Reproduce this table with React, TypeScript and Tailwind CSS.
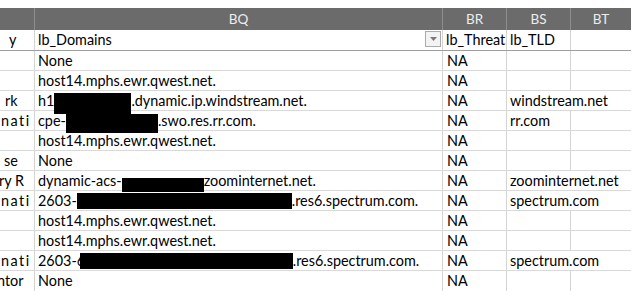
type Seg = string | { box: number; top: number; h: number } | { clip: string; w: number }

type Row = {
  a?: string
  aPad?: string
  bq: Seg[]
  bs?: string
  span?: boolean
}

const rows: Row[] = [
  { bq: ['None'] },
  { bq: ['host14.mphs.ewr.qwest.net.'] },
  {
    a: 'rk',
    aPad: 'pl-[5px]',
    bq: ['h1', { box: 77, top: 2, h: 21 }, '.dynamic.ip.windstream.net.'],
    bs: 'windstream.net',
    span: true,
  },
  { a: 'nati', aPad: 'pl-[1px] tracking-[1.5px]', bq: ['cpe-', { box: 92, top: 3, h: 19 }, '.swo.res.rr.com.'], bs: 'rr.com' },
  { bq: ['host14.mphs.ewr.qwest.net.'] },
  { a: 'se', aPad: 'pl-[4px]', bq: ['None'] },
  {
    a: 'ry R',
    aPad: '-ml-[1px]',
    bq: ['dynamic-acs-', { box: 82, top: 7, h: 14 }, 'zoominternet.net.'],
    bs: 'zoominternet.net',
    span: true,
  },
  {
    a: 'nati',
    aPad: 'pl-[1px] tracking-[1.5px]',
    bq: ['2603-', { box: 215, top: 2, h: 16 }, '.res6.spectrum.com.'],
    bs: 'spectrum.com',
    span: true,
  },
  { bq: ['host14.mphs.ewr.qwest.net.'] },
  { bq: ['host14.mphs.ewr.qwest.net.'] },
  {
    a: 'nati',
    aPad: 'pl-[1px] tracking-[1.5px]',
    bq: ['2603-', { clip: '6', w: 3 }, { box: 213, top: 2, h: 16 }, '.res6.spectrum.com.'],
    bs: 'spectrum.com',
    span: true,
  },
  { a: 'ntor', aPad: '-ml-[3px]', bq: ['None'] },
]

function Segment({ seg }: { seg: Seg }) {
  if (typeof seg === 'string') return <span>{seg}</span>
  if ('clip' in seg) {
    return (
      <span className="inline-block overflow-hidden align-top" style={{ width: seg.w }}>
        {seg.clip}
      </span>
    )
  }
  return (
    <span className="relative inline-block h-[20px] align-top" style={{ width: seg.box }}>
      <span className="absolute left-0 right-0 z-10 bg-black" style={{ top: seg.top, height: seg.h }} />
    </span>
  )
}

function HeaderCell({ label, w, last }: { label: string; w: string; last?: boolean }) {
  return (
    <div className={`${w} flex items-center justify-center ${last ? '' : 'border-r border-[#8e8e8e]'}`}>
      {label}
    </div>
  )
}

export default function App() {
  return (
    <main className="h-[301px] w-[642px] overflow-hidden bg-white font-['Lato',sans-serif] text-[14.4px] text-black">
      <div className="h-[8px]" />

      <div className="flex h-[22px] w-[631px] bg-[#6b6b6b] text-[13.5px] text-[#ededed]">
        <HeaderCell label="" w="w-[35px]" />
        <HeaderCell label="BQ" w="w-[408px]" />
        <HeaderCell label="BR" w="w-[64px]" />
        <HeaderCell label="BS" w="w-[64px]" />
        <HeaderCell label="BT" w="w-[60px]" last />
      </div>

      <div className="w-[631px] leading-[20px]">
        <div className="flex h-[21px] border-b border-[#9e9e9e]">
          <div className="w-[35px] overflow-hidden whitespace-nowrap border-r border-[#d4d4d4] pl-[9px]">y</div>
          <div className="relative w-[408px] border-r border-[#d4d4d4] pl-[3px]">
            lb_Domains
            <div className="absolute right-[1px] top-[1px] flex h-[16px] w-[16px] items-center justify-center border border-[#ababab] bg-[#f3f3f3]">
              <svg width="7" height="4" viewBox="0 0 7 4">
                <path d="M0 0h7L3.5 4z" fill="#7a7a7a" />
              </svg>
            </div>
          </div>
          <div className="w-[64px] overflow-hidden whitespace-nowrap border-r border-[#d4d4d4] pl-[3px]">lb_ThreatScore</div>
          <div className="w-[64px] overflow-hidden whitespace-nowrap border-r border-[#d4d4d4] pl-[3px]">lb_TLD</div>
          <div className="w-[60px]" />
        </div>

        {rows.map((r, i) => (
          <div
            key={i}
            className={`flex h-[20px] ${i === rows.length - 1 ? '' : 'border-b border-[#d9d9d9]'}`}
          >
            <div className="w-[35px] overflow-hidden whitespace-nowrap border-r border-[#d4d4d4]">
              {r.a && <div className={r.aPad}>{r.a}</div>}
            </div>
            <div className="w-[408px] whitespace-nowrap border-r border-[#d4d4d4] pl-[3px]">
              {r.bq.map((s, j) => (
                <Segment key={j} seg={s} />
              ))}
            </div>
            <div className="w-[64px] border-r border-[#d4d4d4] pl-[4px]">NA</div>
            {r.span ? (
              <div className="w-[124px] whitespace-nowrap pl-[3px]">{r.bs}</div>
            ) : (
              <>
                <div className="w-[64px] whitespace-nowrap border-r border-[#d4d4d4] pl-[3px]">{r.bs}</div>
                <div className="w-[60px]" />
              </>
            )}
          </div>
        ))}
      </div>
    </main>
  )
}
